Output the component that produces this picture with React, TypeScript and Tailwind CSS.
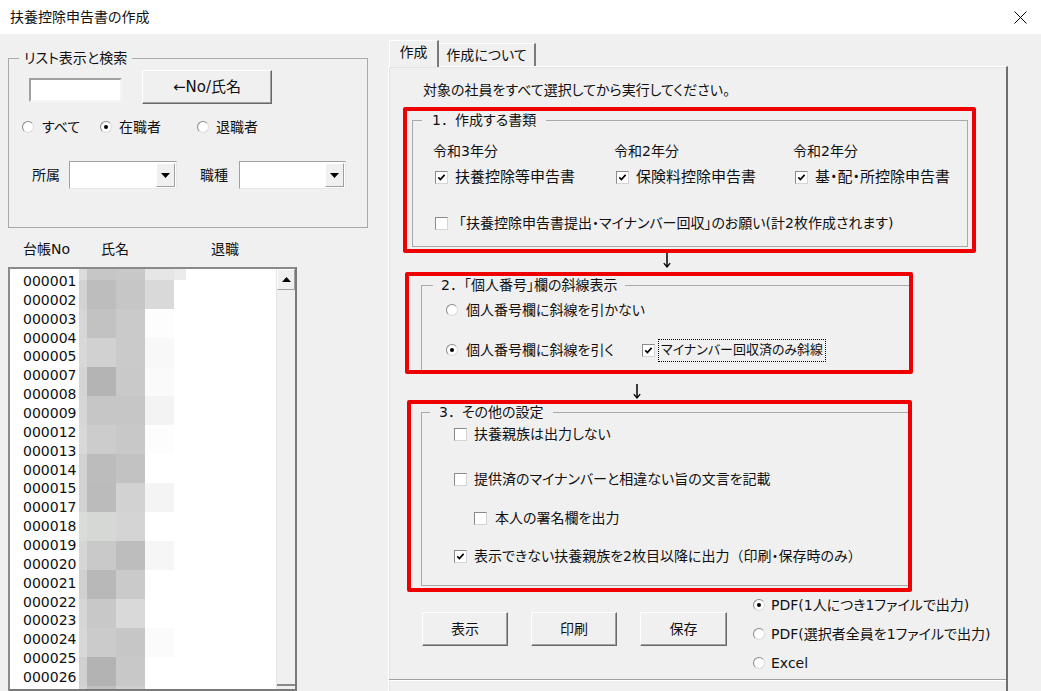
import React from 'react';

const ids = [
  '000001', '000002', '000003', '000004', '000005', '000007', '000008', '000009',
  '000012', '000013', '000014', '000015', '000017', '000018', '000019', '000020',
  '000021', '000022', '000023', '000024', '000025', '000026',
];

// pixelated (blurred) name column
const mosaicTop = ['bg-[#dcdcdc]', 'bg-[#c6c6c6]', 'bg-[#c8c8c8]', 'bg-[#e6e6e6]', 'bg-[#ebebeb]'];
const mosaic: string[][] = [
  ['bg-[#d2d2d2]', 'bg-[#bdbdbd]', 'bg-[#c6c6c6]', 'bg-[#d9d9d9]'],
  ['bg-[#d6d6d6]', 'bg-[#c2c2c2]', 'bg-[#cacaca]', 'bg-[#fdfdfd]'],
  ['bg-[#d8d8d8]', 'bg-[#d1d1d1]', 'bg-[#cacaca]', 'bg-[#f8f8f8]'],
  ['bg-[#d4d4d4]', 'bg-[#b4b4b4]', 'bg-[#c9c9c9]', 'bg-[#fafafa]'],
  ['bg-[#d6d6d6]', 'bg-[#c6c6c6]', 'bg-[#c6c6c6]', 'bg-[#f3f3f3]'],
  ['bg-[#d8d8d8]', 'bg-[#cccccc]', 'bg-[#c8c8c8]', 'bg-[#fdfdfd]'],
  ['bg-[#d2d2d2]', 'bg-[#bcbcbc]', 'bg-[#c2c2c2]', 'bg-white'],
  ['bg-[#d2d2d2]', 'bg-[#bbbbbb]', 'bg-[#d2d2d2]', 'bg-[#f4f4f4]'],
  ['bg-[#dadcda]', 'bg-[#d6d8d6]', 'bg-[#d4d4d4]', 'bg-white'],
  ['bg-[#d6d6d6]', 'bg-[#c9c9c9]', 'bg-[#bdbdbd]', 'bg-[#f6f6f6]'],
  ['bg-[#d0d0d0]', 'bg-[#b8b8b8]', 'bg-[#cacaca]', 'bg-white'],
  ['bg-[#d6d6d6]', 'bg-[#c8c8c8]', 'bg-[#d9d9d9]', 'bg-white'],
  ['bg-[#d8d8d8]', 'bg-[#cbcbcb]', 'bg-[#c6c6c6]', 'bg-[#fbfbfb]'],
  ['bg-[#d0d0d0]', 'bg-[#b3b3b3]', 'bg-[#c8c8c8]', 'bg-white'],
  ['bg-[#d4d4d4]', 'bg-[#c0c0c0]', 'bg-[#cfcfcf]', 'bg-white'],
];
const cellW = ['w-[8px]', 'w-[29px]', 'w-[29px]', 'w-[29px]', 'w-[12px]'];

const Radio = ({ checked }: { checked?: boolean }) => (
  <span className="relative inline-block w-[12px] h-[12px] shrink-0 rounded-full bg-white border border-t-[#8a8a8a] border-l-[#8a8a8a] border-r-[#dadada] border-b-[#dadada]">
    {checked && <span className="absolute left-[3px] top-[3px] w-[4px] h-[4px] rounded-full bg-black" />}
  </span>
);

const Check = ({ checked }: { checked?: boolean }) => (
  <span className="inline-flex w-[13px] h-[13px] shrink-0 items-center justify-center bg-white border border-t-[#8a8a8a] border-l-[#8a8a8a] border-r-[#d4d4d4] border-b-[#d4d4d4]">
    {checked && (
      <svg width="9" height="9" viewBox="0 0 9 9">
        <path d="M1.3 4.4 L3.4 6.6 L7.6 1.9" fill="none" stroke="#000" strokeWidth="1.7" />
      </svg>
    )}
  </span>
);

const Combo = ({ w }: { w: string }) => (
  <div className={`${w} h-[28px] flex bg-white border border-t-[#a0a0a0] border-l-[#a0a0a0] border-r-[#e8e8e8] border-b-[#e8e8e8] p-[1px]`}>
    <div className="flex-1" />
    <div className="w-[19px] h-full flex items-center justify-center bg-[#f0f0f0] border border-t-white border-l-white border-r-[#a0a0a0] border-b-[#a0a0a0]">
      <svg width="9" height="5" viewBox="0 0 9 5"><path d="M0 0 H9 L4.5 5 Z" fill="#000" /></svg>
    </div>
  </div>
);

const DownArrow = () => (
  <svg width="8" height="15" viewBox="0 0 8 15">
    <path d="M4 0 V13.5" stroke="#000" strokeWidth="1.5" />
    <path d="M0.8 10.2 L4 14 L7.2 10.2" fill="none" stroke="#000" strokeWidth="1.3" />
  </svg>
);

const btn =
  'h-[34px] bg-[#f0f0f0] border border-t-white border-l-white border-r-[#6a6a6a] border-b-[#6a6a6a] shadow-[inset_-1px_-1px_0_#a0a0a0] flex items-center justify-center text-[14px]';

export default function App() {
  return (
    <div className="w-[1041px] h-[691px] overflow-hidden bg-[#f0f0f0] text-[#111] text-[14px] flex flex-col [font-family:'DejaVu_Sans','Noto_Sans_CJK_JP',sans-serif] [font-feature-settings:'palt']">
      {/* title bar */}
      <div className="h-[34px] shrink-0 bg-white flex items-center justify-between pl-[10px] pr-[14px]">
        <span className="text-[14px] leading-[16px]">扶養控除申告書の作成</span>
        <svg width="13" height="13" viewBox="0 0 13 13">
          <path d="M0.5 0.5 L12.5 12.5 M12.5 0.5 L0.5 12.5" stroke="#000" strokeWidth="1" />
        </svg>
      </div>

      <div className="flex flex-1 min-h-0">
        {/* left column */}
        <div className="w-[388px] shrink-0 flex flex-col pl-[8px]">
          <fieldset className="shrink-0 mt-[16px] w-[360px] h-[178px] border border-[#a9a9a9]">
            <legend className="ml-[10px] px-[5px] leading-[16px]">リスト表示と検索</legend>
            <div className="flex items-start mt-[4px]">
              <div className="ml-[20px] mt-[8px] w-[93px] h-[24px] bg-white border-2 border-t-[#a0a0a0] border-l-[#a0a0a0] border-r-[#f4f4f4] border-b-[#f4f4f4]" />
              <button className={`${btn} ml-[20px] w-[130px] h-[33px] text-[15px]`}>←No/氏名</button>
            </div>
            <div className="flex items-center h-[16px] mt-[15px]">
              <div className="ml-[13px] w-[78px] flex items-center gap-[8px]">
                <Radio />
                <span>すべて</span>
              </div>
              <div className="w-[97px] flex items-center gap-[7px]">
                <Radio checked />
                <span>在職者</span>
              </div>
              <div className="flex items-center gap-[7px]">
                <Radio />
                <span>退職者</span>
              </div>
            </div>
            <div className="flex items-center mt-[26px]">
              <span className="ml-[23px] w-[37px]">所属</span>
              <Combo w="w-[108px]" />
              <span className="ml-[23px] w-[39px]">職種</span>
              <Combo w="w-[107px]" />
            </div>
          </fieldset>

          <div className="shrink-0 flex mt-[13px] leading-[16px]">
            <span className="ml-[15px] w-[78px]">台帳No</span>
            <span className="w-[110px]">氏名</span>
            <span>退職</span>
          </div>

          <div className="relative mt-[10px] w-[289px] flex-1 min-h-0 overflow-hidden flex bg-white border-2 border-t-[#8a8a8a] border-l-[#8a8a8a] border-r-[#7a7a7a] border-b-[#7a7a7a]">
            <div className="flex-1 pt-[3px] pl-[13px]">
              {ids.map((id) => (
                <div key={id} className="h-[18.86px] leading-[19px] text-[14px]">
                  {id}
                </div>
              ))}
            </div>
            <div className="absolute left-[69px] top-0 flex flex-col">
              <div className="flex h-[11px]">
                {mosaicTop.map((c, i) => (
                  <div key={i} className={`${cellW[i]} ${c}`} />
                ))}
              </div>
              {mosaic.map((row, r) => (
                <div key={r} className="flex h-[29px]">
                  {row.map((c, i) => (
                    <div key={i} className={`${cellW[i]} ${c}`} />
                  ))}
                </div>
              ))}
            </div>
            <div className="w-[19px] shrink-0 flex flex-col bg-[#f0f0f0] border-l border-l-[#e4e4e4]">
              <div className="h-[21px] shrink-0 flex items-center justify-center border border-t-white border-l-white border-r-[#a0a0a0] border-b-[#a0a0a0]">
                <svg width="9" height="5" viewBox="0 0 9 5"><path d="M0 5 H9 L4.5 0 Z" fill="#000" /></svg>
              </div>
              <div className="h-[396px] shrink-0 border-b-2 border-b-[#8a8a8a]" />
            </div>
          </div>
        </div>

        {/* right column: tab control */}
        <div className="flex-1 flex flex-col pt-[6px]">
          <div className="flex items-end h-[27px] relative z-10">
            <div className="ml-[1px] w-[50px] h-[27px] pb-[3px] flex items-center justify-center bg-[#f0f0f0] border-t border-l border-white border-r-2 border-r-[#7a7a7a]">
              作成
            </div>
            <div className="w-[97px] h-[23px] flex items-center justify-center bg-[#f0f0f0] border-t border-white border-r-2 border-r-[#7a7a7a] mb-[1px]">
              作成について
            </div>
          </div>
          <div className="w-[620px] flex-1 -mt-[1px] flex flex-col border-t border-l border-white border-r-2 border-r-[#6e6e6e] shadow-[inset_1px_1px_0_#e3e3e3]">
            <div className="pl-[34px] pt-[15px] leading-[16px]">対象の社員をすべて選択してから実行してください。</div>

            {/* 1 */}
            <div className="ml-[14px] mt-[9px] w-[573px] h-[146px] border-4 border-[#ee0000] rounded-[2px]">
              <fieldset className="ml-[5px] mt-[1px] w-[556px] h-[135px] border border-[#a9a9a9]">
                <legend className="ml-[9px] px-[10px] leading-[16px]">
                  <span className="[font-feature-settings:normal]">1．</span>作成する書類
                </legend>
                <div className="grid grid-cols-[181px_179px_1fr] pl-[20px] mt-[15px] leading-[16px]">
                  <span>令和3年分</span>
                  <span>令和2年分</span>
                  <span>令和2年分</span>
                </div>
                <div className="grid grid-cols-[181px_179px_1fr] pl-[22px] mt-[9px] text-[15px] leading-[18px]">
                  <div className="flex items-center gap-[7px]"><Check checked /><span>扶養控除等申告書</span></div>
                  <div className="flex items-center gap-[7px]"><Check checked /><span>保険料控除申告書</span></div>
                  <div className="flex items-center gap-[7px]"><Check checked /><span>基・配・所控除申告書</span></div>
                </div>
                <div className="flex items-center gap-[4px] pl-[22px] mt-[28px] leading-[18px]">
                  <Check />
                  <span className="[font-feature-settings:normal]">「</span>
                  <span className="-ml-[4px]">扶養控除申告書提出・マイナンバー回収」のお願い(計2枚作成されます)</span>
                </div>
              </fieldset>
            </div>

            <div className="h-[19px] pl-[274px]"><DownArrow /></div>

            {/* 2 */}
            <div className="ml-[16px] w-[508px] h-[102px] border-4 border-[#ee0000] rounded-[2px] overflow-hidden">
              <fieldset className="ml-[12px] mt-[1px] w-[500px] h-[110px] border border-[#a9a9a9]">
                <legend className="ml-[11px] px-[8px] leading-[16px]">
                  <span className="[font-feature-settings:normal]">2．「</span>個人番号」欄の斜線表示
                </legend>
                <div className="flex items-center gap-[8px] pl-[24px] mt-[9px] h-[16px]">
                  <Radio />
                  <span>個人番号欄に斜線を引かない</span>
                </div>
                <div className="flex items-center pl-[24px] mt-[24px] h-[16px]">
                  <Radio checked />
                  <span className="ml-[8px] w-[176px] shrink-0">個人番号欄に斜線を引く</span>
                  <Check checked />
                  <span className="ml-[3px] px-[2px] h-[23px] flex items-center border border-dotted border-black text-[13px]">マイナンバー回収済のみ斜線</span>
                </div>
              </fieldset>
            </div>

            <div className="h-[26px] pl-[244px] pt-[10px]"><DownArrow /></div>

            {/* 3 */}
            <div className="ml-[18px] w-[505px] h-[192px] border-4 border-[#ee0000] rounded-[2px] overflow-hidden">
              <fieldset className="ml-[10px] w-[500px] h-[182px] border border-[#a9a9a9]">
                <legend className="ml-[8px] px-[9px] leading-[16px]">
                  <span className="[font-feature-settings:normal]">3．</span>その他の設定
                </legend>
                <div className="flex items-center gap-[7px] pl-[32px] mt-[6px] h-[16px]">
                  <Check /><span>扶養親族は出力しない</span>
                </div>
                <div className="flex items-center gap-[7px] pl-[32px] mt-[29px] h-[16px]">
                  <Check /><span>提供済のマイナンバーと相違ない旨の文言を記載</span>
                </div>
                <div className="flex items-center gap-[8px] pl-[52px] mt-[23px] h-[16px]">
                  <Check /><span>本人の署名欄を出力</span>
                </div>
                <div className="flex items-center gap-[7px] pl-[32px] mt-[22px] h-[16px]">
                  <Check checked /><span>表示できない扶養親族を2枚目以降に出力<span className="[font-feature-settings:normal]">（</span>印刷・保存時のみ<span className="[font-feature-settings:normal]">）</span></span>
                </div>
              </fieldset>
            </div>

            {/* buttons + output choice */}
            <div className="flex items-start">
              <div className="flex mt-[20px] ml-[33px] gap-[23px]">
                <button className={`${btn} w-[86px]`}>表示</button>
                <button className={`${btn} w-[86px]`}>印刷</button>
                <button className={`${btn} w-[87px]`}>保存</button>
              </div>
              <div className="ml-[26px] mt-[5px] flex flex-col gap-[13px]">
                <div className="flex items-center gap-[6px] h-[16px]"><Radio checked /><span>PDF(1人につき1ファイルで出力)</span></div>
                <div className="flex items-center gap-[6px] h-[16px]"><Radio /><span>PDF(選択者全員を1ファイルで出力)</span></div>
                <div className="flex items-center gap-[6px] h-[16px]"><Radio /><span>Excel</span></div>
              </div>
            </div>
            <div className="mt-[8px] border-t border-t-[#a0a0a0] border-b border-b-white" />
          </div>
        </div>
      </div>
    </div>
  );
}
